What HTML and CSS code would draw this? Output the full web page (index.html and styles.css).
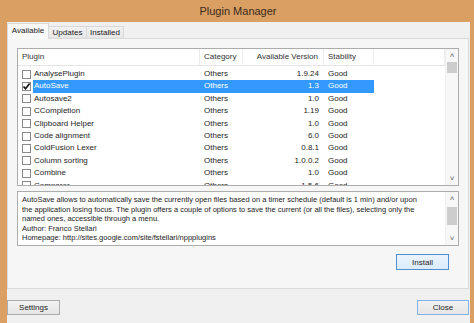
FILE: index.html
```html
<!DOCTYPE html>
<html>
<head>
    <title>Plugin Manager</title>
    <link rel="stylesheet" href="styles.css">
</head>
<body>
    <div class="window">
        <div class="titlebar">Plugin Manager</div>
        <div class="client">
            <!-- Tabs -->
            <div class="tabs">
                <div class="tab active tab-available">Available</div>
                <div class="tab tab-updates">Updates</div>
                <div class="tab tab-installed">Installed</div>
            </div>
            <div class="panel">
                <!-- Plugin list -->
                <div class="list">
                    <div class="list-body">
                        <div class="grid header">
                            <div class="cell col-name">Plugin</div>
                            <div class="cell col-cat">Category</div>
                            <div class="cell col-ver">Available Version</div>
                            <div class="cell col-stab">Stability</div>
                            <div class="cell"></div>
                        </div>
                        <div class="rows">
                            <div class="grid row">
                                <div class="cell col-name"><span class="check"></span><span class="name">AnalysePlugin</span></div>
                                <div class="cell col-cat">Others</div>
                                <div class="cell col-ver">1.9.24</div>
                                <div class="cell col-stab">Good</div>
                            </div>
                            <div class="grid row selected">
                                <div class="cell col-name"><span class="check checked"><svg width="9" height="9" viewBox="0 0 9 9"><path d="M1.5 4.5 L3.5 6.8 L7.6 1.6" fill="none" stroke="#111" stroke-width="1.6"/></svg></span><span class="name">AutoSave</span></div>
                                <div class="cell col-cat">Others</div>
                                <div class="cell col-ver">1.3</div>
                                <div class="cell col-stab">Good</div>
                            </div>
                            <div class="grid row">
                                <div class="cell col-name"><span class="check"></span><span class="name">Autosave2</span></div>
                                <div class="cell col-cat">Others</div>
                                <div class="cell col-ver">1.0</div>
                                <div class="cell col-stab">Good</div>
                            </div>
                            <div class="grid row">
                                <div class="cell col-name"><span class="check"></span><span class="name">CCompletion</span></div>
                                <div class="cell col-cat">Others</div>
                                <div class="cell col-ver">1.19</div>
                                <div class="cell col-stab">Good</div>
                            </div>
                            <div class="grid row">
                                <div class="cell col-name"><span class="check"></span><span class="name">Clipboard Helper</span></div>
                                <div class="cell col-cat">Others</div>
                                <div class="cell col-ver">1.0</div>
                                <div class="cell col-stab">Good</div>
                            </div>
                            <div class="grid row">
                                <div class="cell col-name"><span class="check"></span><span class="name">Code alignment</span></div>
                                <div class="cell col-cat">Others</div>
                                <div class="cell col-ver">6.0</div>
                                <div class="cell col-stab">Good</div>
                            </div>
                            <div class="grid row">
                                <div class="cell col-name"><span class="check"></span><span class="name">ColdFusion Lexer</span></div>
                                <div class="cell col-cat">Others</div>
                                <div class="cell col-ver">0.8.1</div>
                                <div class="cell col-stab">Good</div>
                            </div>
                            <div class="grid row">
                                <div class="cell col-name"><span class="check"></span><span class="name">Column sorting</span></div>
                                <div class="cell col-cat">Others</div>
                                <div class="cell col-ver">1.0.0.2</div>
                                <div class="cell col-stab">Good</div>
                            </div>
                            <div class="grid row">
                                <div class="cell col-name"><span class="check"></span><span class="name">Combine</span></div>
                                <div class="cell col-cat">Others</div>
                                <div class="cell col-ver">1.0</div>
                                <div class="cell col-stab">Good</div>
                            </div>
                            <div class="grid row">
                                <div class="cell col-name"><span class="check"></span><span class="name">Comparer</span></div>
                                <div class="cell col-cat">Others</div>
                                <div class="cell col-ver">1.5.6</div>
                                <div class="cell col-stab">Good</div>
                            </div>
                        </div>
                    </div>
                    <div class="vscroll">
                        <span class="arrow">&#708;</span>
                        <div class="track"><div class="thumb list-thumb"></div></div>
                        <span class="arrow">&#709;</span>
                    </div>
                </div>
                <!-- Description -->
                <div class="desc">
                    <div class="desc-text">
                        <div>AutoSave allows to automatically save the currently open files based on a timer schedule (default is 1 min) and/or upon</div>
                        <div>the application losing focus. The plugin offers a couple of options to save the current (or all the files), selecting only the</div>
                        <div>named ones, accessible through a menu.</div>
                        <div>Author: Franco Stellari</div>
                        <div>Homepage: http://sites.google.com/site/fstellari/nppplugins</div>
                    </div>
                    <div class="vscroll">
                        <span class="arrow">&#708;</span>
                        <div class="track"><div class="thumb desc-thumb"></div></div>
                        <span class="arrow">&#709;</span>
                    </div>
                </div>
                <div class="install-row">
                    <button class="btn btn-default btn-install">Install</button>
                </div>
            </div>
            <div class="bottom-row">
                <button class="btn btn-settings">Settings</button>
                <button class="btn btn-close">Close</button>
            </div>
        </div>
    </div>
</body>
</html>
```

FILE: styles.css
```css
body {
    margin: 0;
    width: 474px;
    height: 323px;
    overflow: hidden;
    background-color: #d99f63;
    font-family: "Liberation Sans", Arial, sans-serif;
    color: #1e1e1e;
}

.window {
    display: flex;
    flex-direction: column;
    height: 323px;
}

.titlebar {
    height: 22px;
    line-height: 22px;
    text-align: center;
    font-size: 11px;
    color: #3b2b1c;
    padding-left: 2px;
}

.client {
    flex: 1;
    margin: 0 4px 0 7px;
    background-color: #f0f0f0;
    display: flex;
    flex-direction: column;
    font-size: 8px;
}

/* Tabs */
.tabs {
    display: flex;
    align-items: flex-end;
    height: 15px;
    margin-top: 1px;
}

.tab {
    height: 11px;
    line-height: 11px;
    text-align: center;
    border: 1px solid #d9d9d9;
    border-bottom: none;
    background: linear-gradient(#f2f2f2, #e6e6e6);
    margin-left: -1px;
    color: #222;
}

.tab.active {
    height: 15px;
    line-height: 14px;
    margin-left: 0;
    margin-bottom: -1px;
    background: #f9f9f9;
    position: relative;
    z-index: 1;
}

.tab-available { width: 40px; }
.tab-updates { width: 37px; }
.tab-installed { width: 36px; }

.panel {
    box-sizing: border-box;
    height: 251px;
    margin-right: 1px;
    border: 1px solid #d9d9d9;
    background-color: #f6f6f6;
    padding: 9px 9px 0 9px;
    display: flex;
    flex-direction: column;
}

/* Plugin list */
.list {
    box-sizing: border-box;
    height: 138px;
    border: 1px solid #acacac;
    background-color: #fff;
    display: flex;
}

.list-body {
    flex: 1;
    display: flex;
    flex-direction: column;
    overflow: hidden;
}

.grid {
    display: grid;
    grid-template-columns: 182px 43px 81px 50px 1fr;
}

.header {
    height: 16px;
    line-height: 16px;
    border-bottom: 1px solid #e5e5e5;
    color: #333;
}

.header .cell {
    border-right: 1px solid #ececec;
}

.rows {
    padding-top: 2px;
    overflow: hidden;
}

.row {
    height: 12.4px;
    line-height: 12.4px;
}

.cell {
    white-space: nowrap;
    overflow: hidden;
}

.col-name {
    padding-left: 4px;
    display: flex;
    align-items: center;
}

.col-cat { padding-left: 4px; }
.col-ver { padding-right: 5px; text-align: right; }
.col-stab { padding-left: 4px; }

.check {
    box-sizing: border-box;
    width: 9px;
    height: 9px;
    border: 1px solid #8a8a8a;
    background-color: #fff;
    margin-right: 2px;
    flex: none;
    display: flex;
    align-items: center;
    justify-content: center;
}

.check svg {
    flex: none;
}

.name {
    flex: 1;
    padding-left: 1px;
}

.row.selected .name,
.row.selected .col-cat,
.row.selected .col-ver,
.row.selected .col-stab {
    background-color: #3399ff;
    color: #fff;
}

/* Scrollbars */
.vscroll {
    width: 12px;
    display: flex;
    flex-direction: column;
    align-items: center;
    background-color: #f7f7f7;
    border-left: 1px solid #f0f0f0;
}

.arrow {
    height: 13px;
    line-height: 13px;
    font-size: 8px;
    color: #606060;
}

.track {
    flex: 1;
    width: 100%;
}

.thumb {
    margin: 0 1px;
    background-color: #cdcdcd;
}

.list-thumb { height: 11px; }
.desc-thumb { height: 18px; margin-top: 2px; }

/* Description */
.desc {
    box-sizing: border-box;
    height: 55px;
    margin-top: 5px;
    border: 1px solid #acacac;
    background-color: #fff;
    display: flex;
}

.desc-text {
    flex: 1;
    padding: 3px 0 0 4px;
    font-size: 7.5px;
    line-height: 9.5px;
    white-space: nowrap;
    overflow: hidden;
    color: #222;
}

/* Buttons */
.install-row {
    display: flex;
    justify-content: flex-end;
    margin-top: 8px;
    padding-right: 10px;
}

.btn {
    box-sizing: border-box;
    height: 16px;
    padding: 0;
    font-family: "Liberation Sans", Arial, sans-serif;
    font-size: 8px;
    color: #1e1e1e;
    border: 1px solid #acacac;
    background: linear-gradient(#f2f2f2, #e5e5e5);
}

.btn-default {
    border-color: #4f8fcf;
    background: linear-gradient(#eaf3fc, #dcecfc);
}

.btn-install { width: 53px; }

.bottom-row {
    display: flex;
    justify-content: space-between;
    margin-top: 11px;
    margin-right: 1px;
}

.btn-settings { width: 53px; height: 15px; }

.btn-close {
    width: 52px;
    height: 15px;
    border-color: #7eb4ea;
}
```
